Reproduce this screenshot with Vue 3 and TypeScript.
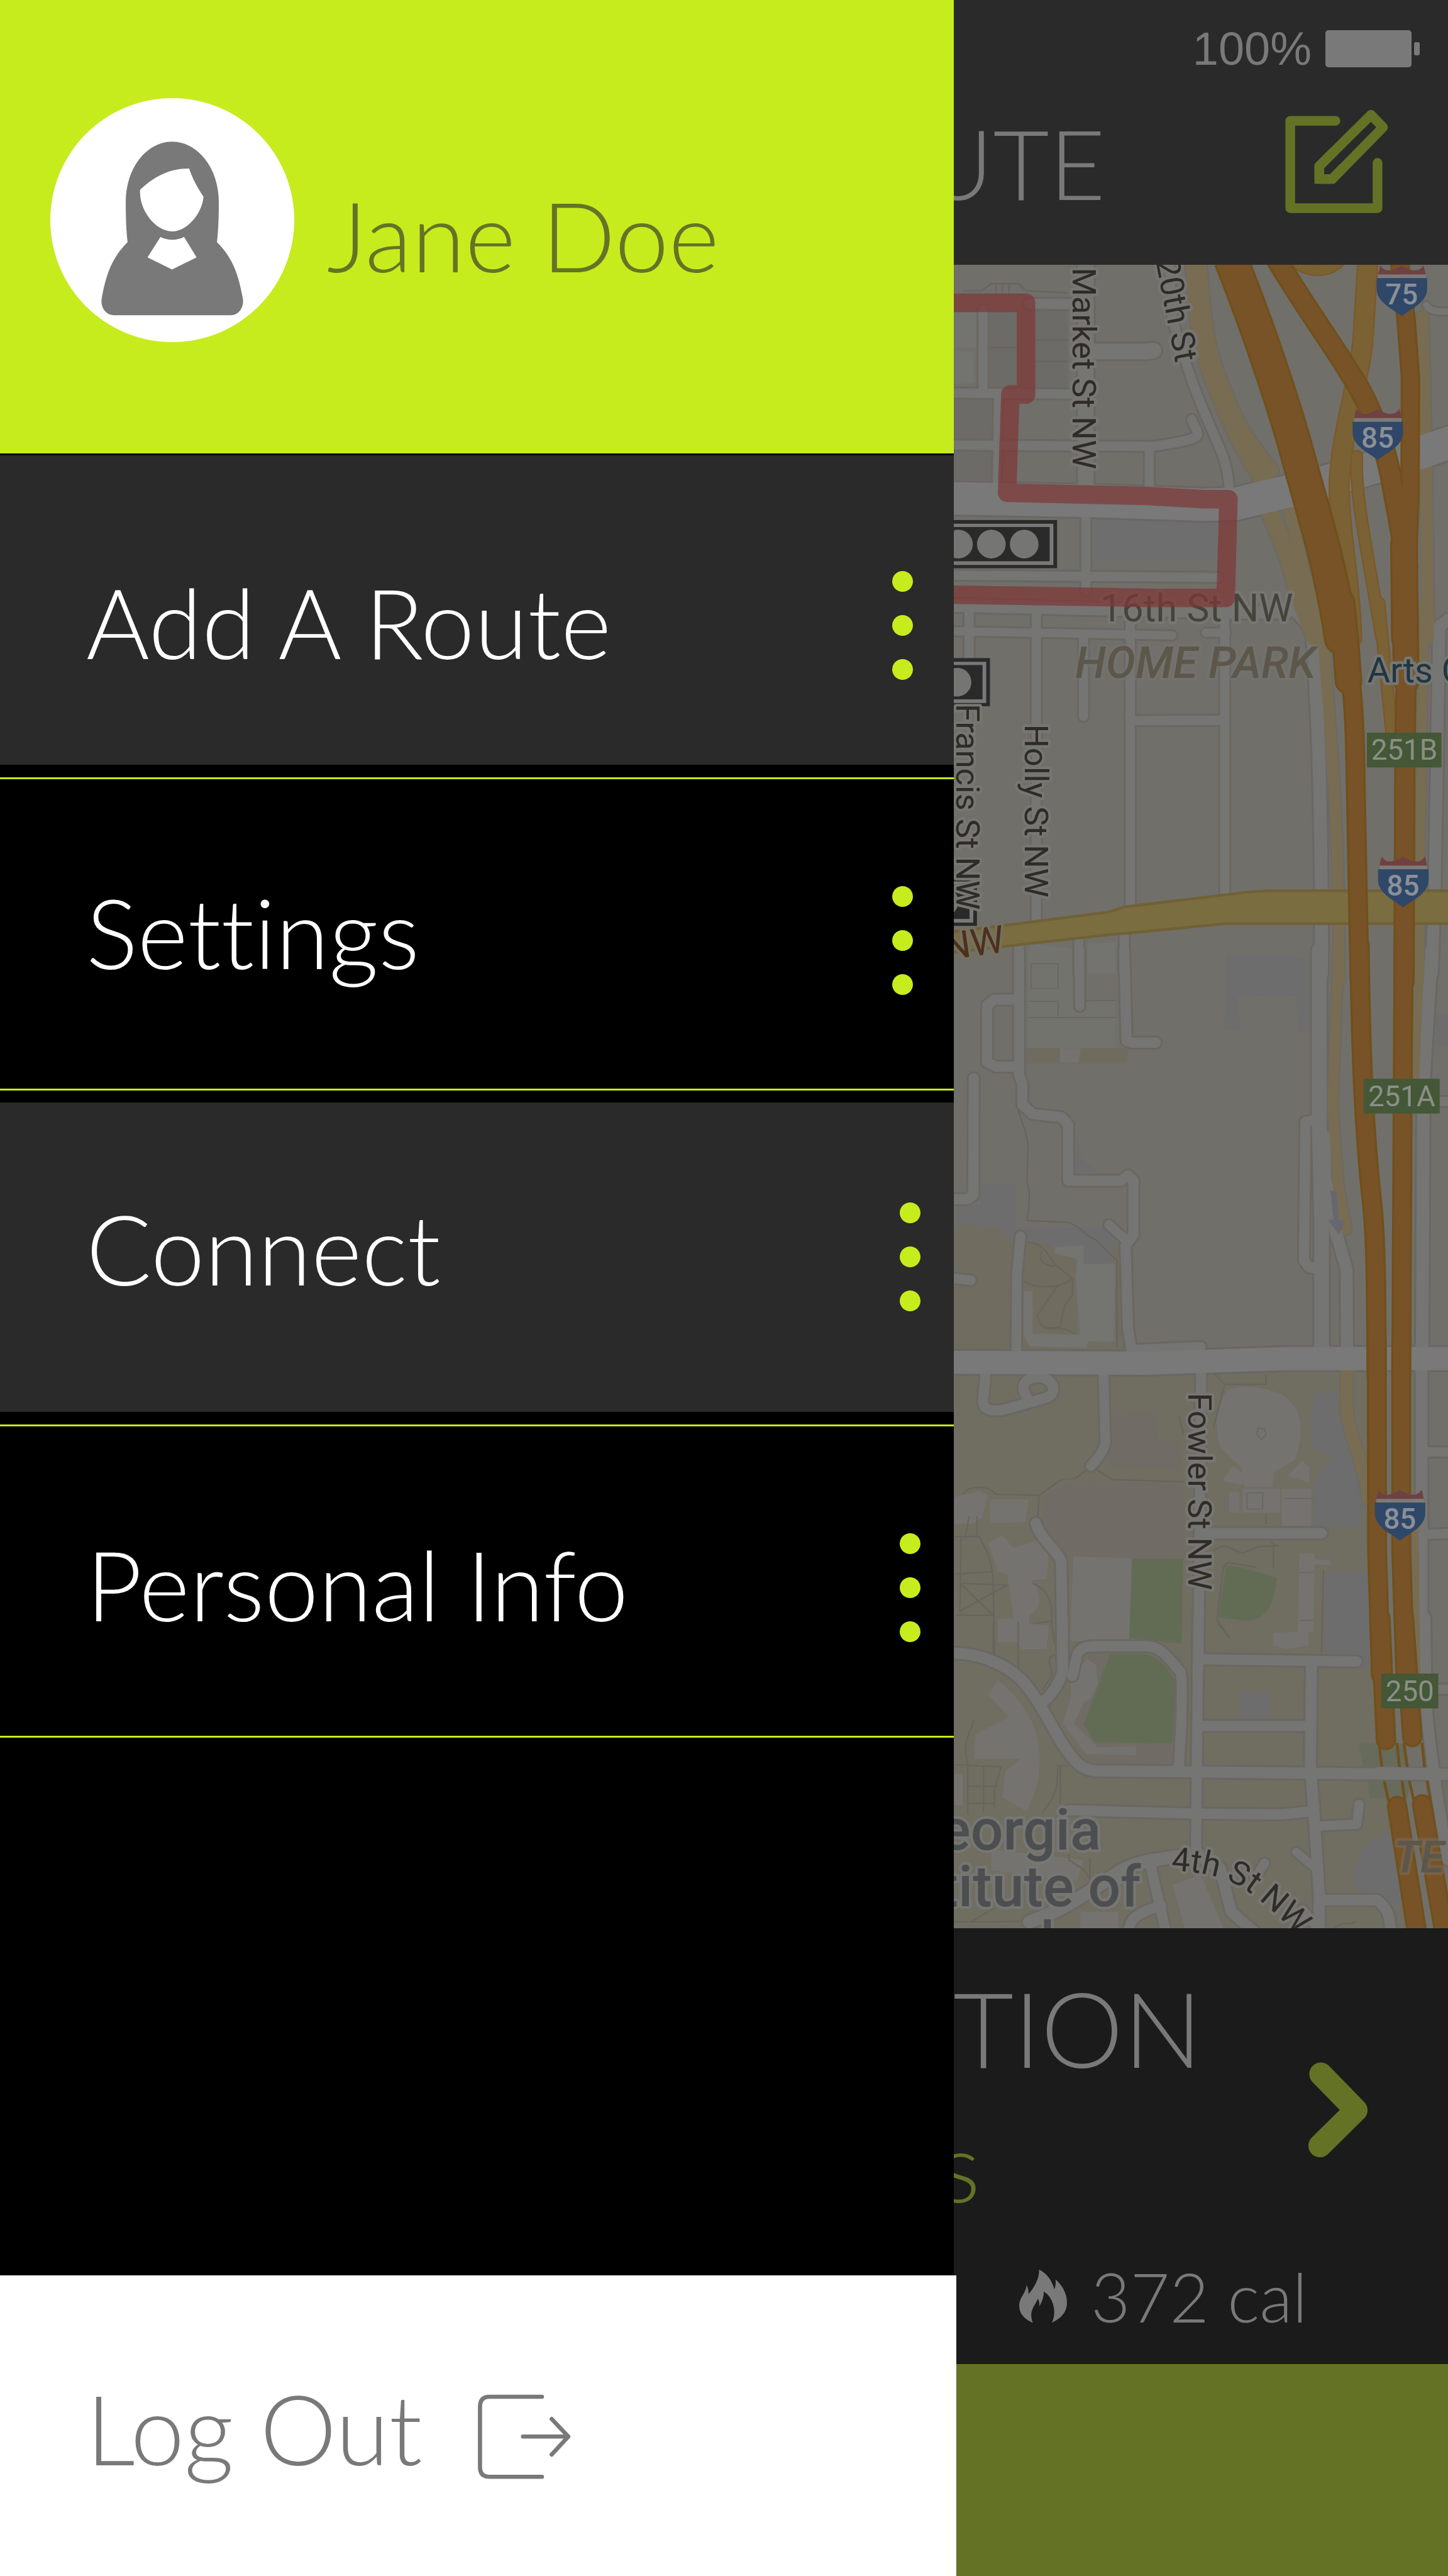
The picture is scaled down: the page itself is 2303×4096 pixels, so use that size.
<script setup lang="ts">
interface MenuItem {
  label: string
  tone: string
  place: string
}

const menu: MenuItem[] = [
  { label: 'Add A Route', tone: 'shaded', place: 'low inner loose' },
  { label: 'Settings', tone: 'plain', place: 'middle inner tight' },
  { label: 'Connect', tone: 'shaded', place: 'high outer tight' },
  { label: 'Personal Info', tone: 'plain', place: 'middle outer loose' },
]

// The map is surveyed in five stacked sheets; each has its own origin and vertical step.
type Sheet = 'A' | 'B' | 'C' | 'D' | 'E'
const sheets: Record<Sheet, [number, number]> = {
  A: [560, 0.5102],
  B: [1300, 0.5102],
  C: [2050, 0.574],
  D: [2900, 0.4464],
  E: [3500, 0.4464],
}

// Projects an absolute path (M, L, C, Z with x y pairs) from sheet units to map units.
function project(sheet: Sheet, d: string): string {
  const [top, step] = sheets[sheet]
  let n = 0
  return d.replace(/-?\d+/g, (v) =>
    n++ % 2 === 0 ? String(Math.round(2050 + Number(v) * 0.6856)) : String(Math.round(top + Number(v) * step)),
  )
}

type Shape = [Sheet, string, string]
type Line = [Sheet, number, string]

const areas = (
  [
    ['A', '#6c6b67', 'M125 208L370 208L370 540L125 540Z'],
    ['A', '#6c6b67', 'M13 590L138 590L138 930L13 930Z'],
    ['A', '#6e6e6e', 'M445 1095L845 1108L840 1270L445 1270Z'],
    ['A', '#737370', 'M13 220L85 220L85 370L13 370ZM13 380L75 390L75 520L13 525Z'],
    ['B', '#737370', 'M250 1440L380 1460L380 1568L245 1568ZM432 1440L520 1435L520 1568L432 1568Z'],
    ['C', '#73736e', 'M245 0L385 0L385 190L520 188L520 365L248 365Z'],
    ['C', '#706b5f', 'M240 368L558 368L558 425L240 425Z'],
    ['C', '#747370', 'M345 368L412 368L405 422L345 422Z'],
    ['C', '#6d6d6d', 'M870 20L1080 20L1130 35L1130 305L1097 305L1090 170L905 172L915 300L865 300Z'],
    ['C', '#6d6d6d', 'M400 710L412 780L470 835L400 835Z'],
    ['C', '#6d6d6d', 'M95 878L205 878L205 1040L520 1045L525 1165L420 1190L300 1110L180 1085L165 1040L20 1030L20 960L95 955Z'],
    ['C', '#706c60', 'M13 1030L160 1040L175 1075L215 1095L300 1100L400 1160L400 1440L540 1500L13 1505Z'],
    ['C', '#706c60', 'M510 1100L550 1110L565 1500L400 1500L520 1470Z'],
    ['C', '#747470', 'M330 1115L420 1110L420 1180L520 1180L515 1470L435 1470L430 1495L250 1490L230 1440L230 1280L260 1280L260 1440L410 1445L395 1230L400 1160L330 1140Z'],
    ['C', '#6d6d6d', 'M1530 240L1568 240L1568 360L1528 360Z'],
    ['D', '#706d61', 'M0 120L1315 120L1315 1568L0 1568Z'],
    ['E', '#706d61', 'M0 0L1330 0L1500 1500L0 1500Z'],
    ['E', '#706d61', 'M1540 700L1568 700L1568 1000L1545 1000Z'],
    ['D', '#706b65', 'M512 318L655 325L650 458L510 460ZM498 462L730 470L725 604L498 590Z'],
    ['D', '#706b65', 'M290 800C290 700 360 665 420 665L735 668L735 1038L400 1025C320 950 290 900 290 800Z'],
    ['D', '#747370', 'M870 230C900 190 980 200 1040 240C1100 290 1125 400 1085 560L1020 620L1015 690L925 690L920 600L850 500C830 400 840 290 870 230Z'],
    ['D', '#747370', 'M890 585L925 630L920 680L858 660ZM1108 562L1132 600L1130 668L1062 640Z'],
    ['D', '#6d6d6d', 'M1155 230L1215 230L1225 370L1310 700L1290 880L1140 880L1150 640L1205 550L1140 500L1135 340Z'],
    ['D', '#747370', 'M920 700L1040 700L1040 815L920 815ZM1045 700L1138 700L1138 880L1045 880ZM878 715L912 715L912 815L878 815Z'],
    ['D', '#747370', 'M388 1025L572 1035L565 1440L378 1435Z'],
    ['D', '#626c55', 'M573 1038L733 1038L730 1448L565 1420Z'],
    ['D', '#626c55', 'M870 1075C900 1065 960 1100 1030 1130C1020 1260 1000 1330 930 1338L845 1320Z'],
    ['D', '#6d6d6d', 'M1182 1100L1315 1100L1320 1568L1182 1568Z'],
    ['E', '#6d6d6d', 'M1182 0L1318 0L1320 195L1182 195Z'],
    ['D', '#747370', 'M1100 1010L1148 1010L1148 1040L1200 1045L1198 1070L1148 1065L1145 1392L1128 1395L1130 1455L1060 1475L1018 1455L1018 1395L1095 1390Z'],
    ['D', '#747370', 'M125 750L248 750L238 860L125 865ZM13 740L90 710L120 730L100 840L70 870L13 870Z'],
    ['D', '#747370', 'M120 960L165 925L200 985L270 950L310 1020L305 1135L255 1140C290 1200 290 1280 250 1310L250 1350L310 1360L305 1475L225 1475L215 1440L150 1440L150 1330L200 1325L180 1110L150 1100Z'],
    ['E', '#706b65', 'M440 150L505 150L422 495L455 580L700 590L700 680L460 680L355 490Z'],
    ['E', '#626c55', 'M503 155L620 155C680 190 690 240 710 290L700 588L455 580L422 495Z'],
    ['E', '#747370', 'M430 180L460 205L465 300L440 375L425 380L390 490L465 605L585 600L585 642L430 638L355 490L380 360L380 280Z'],
    ['E', '#6d6d6d', 'M913 340L1010 340L1010 462L913 462Z'],
    ['E', '#6d6d6d', 'M1385 1020C1300 1060 1285 1130 1283 1180L1265 1200L1280 1300L1345 1310L1400 1370L1440 1370Z'],
    ['E', '#666b5b', 'M1288 587L1425 587L1440 695L1300 695ZM1315 770L1450 770L1440 848L1322 848Z'],
    ['E', '#747370', 'M150 280C250 400 290 550 282 700C280 800 250 880 240 915L165 850L175 720L225 660L75 660L80 540L185 460L120 350Z'],
    ['E', '#747370', 'M700 1270L790 1220L860 1480L740 1480ZM410 1400L530 1400L530 1480L410 1480ZM130 1100L420 1150L400 1250L130 1200Z'],
    ['E', '#747370', 'M13 735L40 735L40 885L13 885Z'],
  ] as Shape[]
).map(([s, fill, d]) => ({ fill, d: project(s, d) }))

const footways = (
  [
    ['A', 3, 'M40 130L100 130L130 100L215 100L240 130L370 140M145 105L145 150M165 105L165 150M185 105L185 150M125 370L210 370M268 337L372 337M268 430L372 430'],
    ['C', 3, 'M215 600C225 650 248 700 245 740L242 870C255 920 248 970 242 1015L370 1022C410 1035 430 1080 455 1085L525 1165L525 1495'],
    ['C', 3, 'M245 1098C290 1100 300 1130 330 1180L385 1235C340 1275 270 1270 232 1245M340 1260L275 1370C280 1430 320 1430 345 1415C360 1360 350 1340 385 1300L385 1235M290 1130C275 1150 285 1185 330 1188M300 1418C340 1418 370 1420 395 1445'],
    ['C', 2, 'M248 252L520 252M255 50L340 50L340 142L255 142ZM248 192L340 192L340 252M420 190L520 188'],
    ['D', 3, 'M280 730L350 655L395 650L430 605M460 605L510 655L735 665M40 725C60 680 120 680 145 725L280 730L275 850'],
    ['D', 3, 'M13 930L90 930C120 1000 135 1080 135 1160L140 1500M35 930L30 1300M60 830L50 920M85 830L85 925M30 1155L135 1310M30 1290L180 1165L30 1155M13 1110L135 1100M20 1310L135 1310'],
    ['D', 3, 'M260 1155C330 1200 320 1300 320 1350L330 1450M260 1350L315 1340'],
    ['D', 3, 'M835 145L865 195L995 195L995 145M865 195L830 400M720 350L735 430M830 1000C870 950 890 1000 920 1010L970 980L1030 975L1010 955M1018 980L1018 1080M995 820L995 870'],
    ['D', 3, 'M965 1080L875 1055L860 1080L840 1330L880 1420M1175 1090L1170 1490'],
    ['D', 2, 'M935 720L985 720L985 798L935 798ZM1050 745L1138 745M1100 1105L1145 1105M1100 1335L1145 1335M970 405L990 410L995 440L980 462L965 435Z'],
    ['E', 3, 'M215 0L215 220M135 0L135 150M330 160C290 180 330 220 320 260L290 330M75 470C65 530 45 560 50 640L55 690L55 930M13 690L160 700L140 810L140 900M55 793L150 793M55 875L140 875M105 700L105 920M340 700L335 800C320 870 310 880 290 920M370 695L335 695M347 695L347 880'],
    ['E', 3, 'M13 1450L230 1448M65 1450L140 1380M440 1140L440 1250M375 1120L375 1150C400 1180 430 1190 440 1250M1210 1478C1240 1440 1270 1470 1275 1445M840 0L880 75'],
  ] as Line[]
).map(([s, w, d]) => ({ w, d: project(s, d) }))

const streets = (
  [
    ['A', 20, 'M103 210L103 550'],
    ['A', 22, 'M250 185L385 187'],
    ['A', 20, 'M0 563L400 567'],
    ['A', 18, 'M152 567L148 960'],
    ['A', 20, 'M0 782L370 785L640 787C700 775 760 765 777 745C785 720 765 700 762 675'],
    ['A', 34, 'M428 0L428 960'],
    ['A', 34, 'M430 387L620 387L640 382'],
    ['A', 20, 'M690 0L700 250L740 420C770 560 820 700 850 800C870 860 875 900 880 975'],
    ['A', 20, 'M627 790L627 980'],
    ['A', 20, 'M428 1060L428 1400'],
    ['A', 20, 'M0 1333L845 1342'],
    ['A', 28, 'M0 1460L900 1490L1060 1490'],
    ['A', 14, 'M1500 190C1510 220 1540 218 1580 218'],
    ['B', 20, 'M60 30L60 300'],
    ['B', 20, 'M272 30L272 1400'],
    ['B', 18, 'M0 120L700 137'],
    ['B', 18, 'M805 125L870 125'],
    ['B', 20, 'M568 30L568 1320'],
    ['B', 20, 'M865 60L865 1290'],
    ['B', 20, 'M568 497L865 495'],
    ['B', 20, 'M420 155L420 480'],
    ['B', 28, 'M1075 10L1140 110C1150 300 1170 600 1170 1568'],
    ['B', 26, 'M1568 70L1540 100L1525 1230L1517 1568'],
    ['B', 20, 'M217 1410L217 1568M405 1370L405 1568M548 1360L548 1568'],
    ['C', 22, 'M217 0L217 470L228 500L228 580L260 615L350 628L372 655L372 865L540 865L560 845L578 865L578 1070L553 1110L560 1420L575 1530'],
    ['C', 22, 'M210 185L140 185L117 205L117 420L145 437L215 437'],
    ['C', 20, 'M408 0L408 210'],
    ['C', 22, 'M548 0L555 340L570 347L648 347'],
    ['C', 22, 'M75 480L73 920L55 935L0 935'],
    ['C', 21, 'M222 1075L210 1220L208 1530'],
    ['C', 21, 'M0 1232L65 1240'],
    ['C', 20, 'M500 1032L550 1085'],
    ['C', 32, 'M1163 0L1163 650L1170 1000L1170 1530'],
    ['C', 22, 'M1150 640L1118 645L1115 1165L1130 1192L1160 1195'],
    ['C', 26, 'M1180 700L1180 850L1215 1060L1248 1200L1250 1530'],
    ['C', 27, 'M1517 0L1490 500L1487 1568'],
    ['C', 20, 'M1500 568L1580 568'],
    ['C', 20, 'M590 1500L790 1490'],
    ['D', 22, 'M113 130L105 250C95 330 140 325 170 315L300 260C340 240 330 170 285 160C230 160 220 210 240 250'],
    ['D', 21, 'M483 130L488 480C480 530 460 560 443 590'],
    ['D', 22, 'M790 130L782 1568'],
    ['D', 23, 'M270 865C285 950 350 1010 350 1060L355 1568'],
    ['D', 23, 'M790 915L1170 915'],
    ['D', 26, 'M1485 0L1485 1568'],
    ['D', 20, 'M1490 520L1580 522M1490 920L1580 915'],
    ['E', 24, 'M0 150C80 145 160 190 220 270C270 350 300 450 350 580C390 670 410 715 460 718L1568 738'],
    ['E', 23, 'M355 -20L355 240C340 310 320 350 290 390'],
    ['E', 22, 'M385 260L400 160C410 120 430 117 460 117L620 117C670 120 690 180 725 240C735 300 728 500 720 700'],
    ['E', 22, 'M782 -20L774 1110'],
    ['E', 22, 'M790 180L1280 190'],
    ['E', 24, 'M1137 200L1135 700L1145 900L1162 1320L1162 1500'],
    ['E', 22, 'M785 502L1130 502'],
    ['E', 22, 'M375 910L760 925L1040 930L1140 915'],
    ['E', 20, 'M1160 985L1280 977L1288 880'],
    ['E', 18, 'M1090 1110L1160 1200'],
    ['E', 23, 'M1165 1345L1345 1345C1380 1390 1385 1420 1387 1500'],
    ['E', 28, 'M250 1450C350 1400 450 1290 540 1200C600 1150 660 1150 780 1120'],
    ['E', 22, 'M630 1170L680 1500'],
    ['E', 22, 'M565 1500C560 1430 600 1400 665 1370'],
    ['E', 24, 'M780 1130L850 1190L885 1400L960 1500'],
    ['E', 20, 'M990 1165L960 1240M1110 1390L1170 1500'],
    ['E', 24, 'M1495 -20L1500 400C1510 600 1530 800 1550 1000L1568 1150'],
    ['E', 20, 'M1500 325L1580 325'],
  ] as Line[]
).map(([s, w, d]) => ({ w, d: project(s, d) }))

const avenues = (
  [
    ['A', 70, 'M0 1008L450 1020L800 1035L900 1030L1150 950L1400 850L1600 760'],
    ['D', 50, 'M0 88L620 92L1060 70L1580 70'],
  ] as Line[]
).map(([s, w, d]) => ({ w, d: project(s, d) }))

const ramps = (
  [
    ['A', 46, 'M775 0C785 250 800 400 850 550C890 690 930 800 985 910'],
    ['A', 34, 'M830 500C880 650 930 760 1010 890'],
    ['A', 36, 'M1000 1050C1050 1200 1090 1350 1090 1400L1150 1600'],
    ['A', 24, 'M1060 1020L1120 1350L1180 1600'],
    ['A', 26, 'M1488 240L1500 900L1505 1600'],
    ['B', 24, 'M1170 60C1200 600 1225 900 1225 1600'],
    ['B', 20, 'M1494 0L1482 900L1478 1600'],
    ['C', 22, 'M1222 0L1205 580L1222 880L1248 1050'],
    ['C', 18, 'M1480 0L1465 480'],
    ['D', 26, 'M1250 125L1250 330C1255 430 1310 600 1315 750'],
    ['D', 14, 'M1465 800L1470 1600'],
  ] as Line[]
).map(([s, w, d]) => ({ w, d: project(s, d) }))

const connectors = (
  [
    ['A', 46, 'M1315 0L1300 350C1280 550 1230 750 1225 950C1225 1150 1260 1350 1265 1600'],
    ['A', 28, 'M1280 830C1275 1000 1310 1200 1360 1600'],
    ['A', 26, 'M1080 0C1120 50 1190 60 1230 0'],
    ['B', 28, 'M1350 0L1390 540'],
  ] as Line[]
).map(([s, w, d]) => ({ w, d: project(s, d) }))

const freeways = (
  [
    ['A', 76, 'M885 0C960 250 1050 600 1100 850C1140 1050 1200 1300 1232 1600'],
    ['A', 48, 'M1030 0C1110 180 1190 330 1260 480C1330 620 1370 800 1385 900C1400 1000 1420 1150 1440 1300'],
    ['A', 42, 'M1415 0L1435 240L1450 500L1448 1000L1433 1600'],
    ['A', 60, 'M1430 1200L1433 1600'],
    ['B', 60, 'M1232 0C1245 150 1250 250 1255 330'],
    ['B', 43, 'M1255 250C1270 400 1275 500 1278 800L1290 1600'],
    ['B', 58, 'M1433 0L1437 330'],
    ['B', 46, 'M1437 300L1432 600L1429 1600'],
    ['C', 44, 'M1290 -20C1292 300 1300 600 1325 900C1340 1050 1342 1200 1344 1600'],
    ['C', 43, 'M1428 -20L1421 1600'],
    ['D', 43, 'M1344 -20L1345 1000L1356 1600'],
    ['D', 43, 'M1421 -20L1420 1000L1434 1600'],
    ['E', 44, 'M1355 -20L1372 570'],
    ['E', 44, 'M1430 -20L1455 555'],
    ['E', 44, 'M1407 890L1480 1600'],
    ['E', 44, 'M1487 880L1568 1600'],
  ] as Line[]
).map(([s, w, d]) => ({ w, d: project(s, d) }))

const parkway = project(
  'B',
  'M-10 1393L170 1365L500 1308L550 1285L880 1232C960 1215 1020 1217 1100 1217L1600 1217L1600 1356L870 1356L570 1396L500 1403L170 1453L-10 1482Z',
)
const tunnels = project('E', 'M1352 600L1360 697M1408 590L1415 697M1430 590L1440 697M1487 590L1494 697M1368 772L1380 860M1424 772L1432 860M1447 772L1460 860M1503 772L1512 860')
const overpass = project('E', 'M1350 725L1580 735')
const loop = project('A', 'M-20 180L239 180L239 568L190 568L179 984L620 998L800 1012L877 1012L868 1428L640 1428L-20 1415')
const oneWay = project('C', 'M1197 905L1215 905L1225 1012L1243 1015L1225 1070L1192 1015L1207 1010Z')

const shields = [
  { x: 2971, y: 571, n: '75' },
  { x: 2919, y: 881, n: '85' },
  { x: 2974, y: 1847, n: '85' },
  { x: 2967, y: 3214, n: '85' },
]
const exits = [
  { x: 2950, y: 1580, w: 161, n: '251B' },
  { x: 2943, y: 2327, w: 164, n: '251A' },
  { x: 2981, y: 3611, w: 123, n: '250' },
]
const signals = [
  { x: 2281, y: 1121 },
  { x: 2136, y: 1419 },
  { x: 2108, y: 1893 },
]
const streetNames = [
  { x: 2314, y: 576, r: 90, n: 'Market St NW' },
  { x: 2494, y: 562, r: 79, n: '20th St' },
  { x: 2064, y: 1518, r: 90, n: 'Francis St NW' },
  { x: 2211, y: 1562, r: 90, n: 'Holly St NW' },
  { x: 2565, y: 3005, r: 90, n: 'Fowler St NW' },
]
</script>

<template>
  <div class="app">
    <aside class="drawer">
      <header class="profile">
        <svg class="avatar" viewBox="109 212 527 527" aria-hidden="true">
          <circle cx="372.500" cy="475.500" r="263.500" fill="#fff" />
          <path
            fill="#797979"
            fill-rule="evenodd"
            d="M372 306C428 306 473 364 473 436C473 470 472 498 469 523C502 556 515 590 525 645C528 664 516 681 499 681H247C229 681 217 664 220 645C230 590 243 556 276 523C273 498 272 470 272 436C272 364 316 306 372 306ZM303 410C329 385 364 363 409 364C416 386 427 405 440 425C437 462 404 500 372 500C338 500 300 455 303 410ZM347 512L319 556L372 582L425 556L398 512C383 520 362 520 347 512Z"
          />
        </svg>
        <h1 class="name">Jane Doe</h1>
      </header>

      <nav class="menu">
        <button v-for="item in menu" :key="item.label" type="button" class="item" :class="[item.tone, item.place]">
          <span class="label">{{ item.label }}</span>
          <span class="dots" aria-hidden="true"><i></i><i></i><i></i></span>
        </button>
      </nav>

      <button type="button" class="logout">
        <span>Log Out</span>
        <svg class="exit" viewBox="1030 5166 204 184" aria-hidden="true">
          <path d="M1170 5171H1056Q1036 5171 1036 5193V5323Q1036 5344 1056 5344H1170M1129 5257H1227M1191 5219L1227 5257L1191 5296" />
        </svg>
      </button>
    </aside>

    <main class="screen">
      <header class="bar">
        <div class="status">
          <span>100%</span>
          <svg class="battery" viewBox="0 0 150 60" aria-hidden="true">
            <rect width="137" height="59" rx="5" />
            <rect x="141" y="19" width="9" height="21" rx="3" />
          </svg>
        </div>
        <div class="heading">
          <h2 class="title">UTE</h2>
          <button type="button" class="edit" aria-label="Edit route">
            <svg viewBox="2774 234 226 226" aria-hidden="true">
              <path stroke-linejoin="round" d="M2883 260H2785V449H2974V351" />
              <path stroke-linejoin="round" d="M2848 386V358L2960 247L2986 274L2876 386Z" />
              <path d="M2880 326L2848 358V386H2876L2900 361" stroke-linecap="butt" />
            </svg>
          </button>
        </div>
      </header>

      <svg class="map" viewBox="2058 570 1067 3591" role="img" aria-label="Route map">
        <rect x="2058" y="570" width="1067" height="3591" fill="#706f6a" />
        <path v-for="(a, i) in areas" :key="'a' + i" :d="a.d" :fill="a.fill" />
        <g class="footways">
          <path v-for="(l, i) in footways" :key="'w' + i" :d="l.d" :stroke-width="l.w" />
        </g>
        <g class="lines">
          <path v-for="(l, i) in streets" :key="'sc' + i" :d="l.d" :stroke-width="l.w + 8" stroke="#6a6763" />
          <path v-for="(l, i) in avenues" :key="'ac' + i" :d="l.d" :stroke-width="l.w + 8" stroke="#6a6763" />
          <path v-for="(l, i) in ramps" :key="'rc' + i" :d="l.d" :stroke-width="l.w + 6" stroke="#6b6a66" />
          <path v-for="(l, i) in streets" :key="'sf' + i" :d="l.d" :stroke-width="l.w" stroke="#757573" />
          <path v-for="(l, i) in ramps" :key="'rf' + i" :d="l.d" :stroke-width="l.w" stroke="#786d52" />
          <path v-for="(l, i) in avenues" :key="'af' + i" :d="l.d" :stroke-width="l.w" stroke="#797979" />
          <path :d="parkway" fill="#7a6d40" stroke="#706137" stroke-width="6" />
          <path v-for="(l, i) in connectors" :key="'cc' + i" :d="l.d" :stroke-width="l.w" stroke="#7c5829" />
          <path v-for="(l, i) in connectors" :key="'cf' + i" :d="l.d" :stroke-width="l.w - 6" stroke="#7a6234" />
          <path v-for="(l, i) in freeways" :key="'fc' + i" :d="l.d" :stroke-width="l.w" stroke="#70501c" />
          <path v-for="(l, i) in freeways" :key="'ff' + i" :d="l.d" :stroke-width="l.w - 9" stroke="#785327" />
          <path :d="tunnels" stroke="#70501c" stroke-width="6" />
          <path :d="overpass" stroke="#757573" stroke-width="24" />
        </g>
        <path :d="oneWay" fill="#67676f" />

        <g v-for="e in exits" :key="e.n">
          <rect :x="e.x" :y="e.y" :width="e.w" height="75" fill="#445736" />
          <text class="exit-no" :x="e.x + e.w / 2" :y="e.y + 59">{{ e.n }}</text>
        </g>
        <g v-for="(s, i) in shields" :key="'sh' + i" :transform="`translate(${s.x} ${s.y})`">
          <path fill="#704142" d="M8 0Q14 12 28 11Q38 10 43 6Q50 5 54 0Q58 5 65 6Q70 10 80 11Q94 12 101 0L106 20H3Z" />
          <rect x="3" y="20" width="103" height="8" fill="#7b7b7b" />
          <path fill="#2f4768" d="M0 28H109V50C109 80 78 92 54 110C31 92 0 80 0 50Z" />
          <text class="shield-no" x="54" y="84">{{ s.n }}</text>
        </g>
        <g v-for="(s, i) in signals" :key="'si' + i" :transform="`translate(${s.x} ${s.y})`">
          <rect x="-260" width="260" height="104" fill="#2a2a2a" />
          <rect x="-256" y="8" width="248" height="89" fill="#797979" />
          <rect x="-248" y="15" width="232" height="74" fill="#2a2a2a" />
          <circle v-for="k in 3" :key="k" :cx="-71 * k" cy="52" r="31" fill="#757573" />
        </g>

        <text
          v-for="s in streetNames"
          :key="s.n"
          class="street"
          :transform="`translate(${s.x} ${s.y}) rotate(${s.r})`"
        >{{ s.n }}</text>
        <path id="fourth" d="M2527 4036Q2636 4040 2694 4082T2794 4172" fill="none" />
        <text class="street"><textPath href="#fourth">4th St NW</textPath></text>
        <text class="avenue" x="2374" y="1340">16th St NW</text>
        <text class="parkway" transform="translate(2040 2071) rotate(-8)">NW</text>
        <text class="district" x="2320" y="1462">HOME PARK</text>
        <text class="district" x="3008" y="4040">TE</text>
        <text class="place-name" x="2951" y="1471">Arts C</text>
        <g class="campus">
          <text x="2376" y="3991">eorgia</text>
          <text x="2462" y="4113">titute of</text>
          <text x="2276" y="4234">l</text>
        </g>
        <path :d="loop" class="loop" />
      </svg>

      <section class="stats">
        <div class="route-name">
          <div>
            <h3 class="kind">TION</h3>
            <p class="unit">s</p>
          </div>
          <button type="button" class="next" aria-label="Next route">
            <svg viewBox="2821 4446 130 208" aria-hidden="true">
              <path d="M2849 4473L2925 4551L2847 4628" />
            </svg>
          </button>
        </div>
        <p class="calories">
          <svg viewBox="219 1137 150 167" aria-hidden="true">
            <path
              d="M281 1137C310 1150 325 1180 329 1199C334 1190 334 1178 333 1168C352 1184 369 1210 369 1240C369 1275 345 1292 321 1304C332 1285 330 1262 325 1245C318 1222 306 1212 296 1206C297 1222 290 1240 282 1252C283 1243 281 1234 278 1228C270 1250 247 1266 262 1304C240 1295 219 1278 219 1250C219 1225 240 1212 242 1186C247 1195 249 1204 248 1214C262 1200 284 1165 281 1137Z"
            />
          </svg>
          <span>372 cal</span>
        </p>
      </section>

      <footer class="foot"></footer>
    </main>
  </div>
</template>

<style>
body {
  margin: 0;
  background: #000;
}
</style>

<style scoped>
.app {
  display: grid;
  grid-template-columns: minmax(0, 1517fr) minmax(0, 786fr);
  min-height: 100vh;
  font-family: Lato, 'Open Sans', sans-serif;
  font-weight: 300;
  font-size: 154px;
  line-height: 156px;
  font-variant-ligatures: no-common-ligatures;
}
h1,
h2,
h3,
p {
  margin: 0;
  font: inherit;
}
button {
  margin: 0;
  padding: 0;
  border: 0;
  background: none;
  font: inherit;
  color: inherit;
  text-align: left;
  cursor: pointer;
}
svg {
  display: block;
}

.drawer {
  position: relative;
  z-index: 1;
  display: flex;
  flex-direction: column;
  background: #000;
}
.profile {
  display: flex;
  align-items: flex-start;
  gap: 52px;
  box-sizing: border-box;
  height: 721px;
  padding: 156px 80px 0;
  background: #c6ec1e;
}
.avatar {
  flex: none;
  width: 388px;
  height: 388px;
}
.name {
  padding-top: 140px;
  color: #657326;
}
.menu {
  display: flex;
  flex-direction: column;
  flex: 1;
  padding-top: 3px;
}
.item {
  display: flex;
  justify-content: space-between;
  align-items: flex-start;
  box-sizing: border-box;
  padding-left: 137px;
  color: #fff;
}
.shaded {
  height: 492px;
  margin-bottom: 20px;
  background: #2a2a2a;
}
.plain {
  height: 498px;
  border-top: 3px solid #c6ec1e;
  border-bottom: 3px solid #c6ec1e;
}
.plain:not(:last-child) {
  margin-bottom: 19px;
}
.low {
  padding-top: 179px;
}
.middle {
  padding-top: 165px;
}
.high {
  padding-top: 154px;
}
.inner {
  padding-right: 65px;
}
.outer {
  padding-right: 53px;
}
.loose .label {
  padding-top: 8px;
}
.dots {
  display: flex;
  flex-direction: column;
  gap: 37px;
  padding-top: 5px;
}
.dots i {
  width: 33px;
  height: 33px;
  border-radius: 50%;
  background: #c6ec1e;
}
.logout {
  display: flex;
  align-items: flex-start;
  gap: 88px;
  box-sizing: border-box;
  height: 478px;
  margin-right: -4px;
  padding: 165px 137px 0;
  background: #fff;
  color: #797979;
}
.exit {
  width: 150px;
  height: 136px;
  margin-top: 24px;
  fill: none;
  stroke: #797979;
  stroke-width: 9;
  stroke-linecap: round;
  stroke-linejoin: round;
}

.screen {
  display: flex;
  flex-direction: column;
  overflow: hidden;
  color: #797979;
}
.bar {
  box-sizing: border-box;
  height: 421px;
  padding-top: 42px;
  background: #2a2a2a;
}
.status {
  display: flex;
  justify-content: flex-end;
  align-items: center;
  gap: 22px;
  padding-right: 45px;
  font: 400 74px/72px 'Liberation Sans', Arial, sans-serif;
}
.battery {
  width: 150px;
  height: 60px;
  fill: #797979;
}
.heading {
  display: flex;
  justify-content: flex-end;
  gap: 286px;
  padding: 59px 93px 0 0;
}
.title {
  padding-top: 8px;
}
.edit svg {
  width: 166px;
  height: 166px;
  fill: none;
  stroke: #647226;
  stroke-width: 21;
  stroke-linecap: round;
}
.map {
  width: 100%;
  height: auto;
}
.footways path {
  fill: none;
  stroke: #67645e;
}
.lines path:not([fill]) {
  fill: none;
  stroke-linecap: round;
  stroke-linejoin: round;
}
.map text {
  font-family: Roboto, 'Noto Sans', sans-serif;
  font-weight: 400;
  paint-order: stroke;
  stroke: #767673;
  stroke-width: 12px;
  stroke-linejoin: round;
}
.map .street {
  font-size: 71px;
  fill: #2f2b27;
}
.map .avenue {
  font-size: 83px;
  fill: #45443b;
}
.map .parkway {
  font-size: 82px;
  fill: #4c301d;
  stroke: #75705f;
}
.map .district {
  font-size: 96px;
  font-style: italic;
  font-weight: 500;
  fill: #5c574a;
  stroke-opacity: 0.4;
}
.map .place-name {
  font-size: 76px;
  fill: #203642;
}
.map .exit-no {
  font-size: 62px;
  fill: #8a8f86;
  stroke: none;
  text-anchor: middle;
}
.map .shield-no {
  font-size: 62px;
  font-weight: 500;
  fill: #8b9097;
  stroke: none;
  text-anchor: middle;
}
.map .campus text {
  font-size: 124px;
  font-weight: 500;
  fill: #4c4e50;
  text-anchor: end;
}
.loop {
  fill: none;
  stroke: #7e3838;
  stroke-opacity: 0.72;
  stroke-width: 40;
  stroke-linejoin: round;
}

.stats {
  box-sizing: border-box;
  height: 693px;
  padding-top: 75px;
  background: #1b1b1b;
}
.route-name {
  display: flex;
  justify-content: space-between;
}
.kind {
  display: flex;
  justify-content: flex-end;
  width: 395px;
  font-size: 166px;
  line-height: 166px;
}
.unit {
  display: flex;
  justify-content: flex-end;
  width: 42px;
  padding-top: 58px;
  color: #647226;
}
.next {
  align-self: flex-start;
  padding: 137px 127px 0 0;
}
.next svg {
  width: 96px;
  height: 153px;
  fill: none;
  stroke: #647226;
  stroke-width: 50;
  stroke-linecap: round;
  stroke-linejoin: round;
}
.calories {
  display: flex;
  align-items: center;
  gap: 38px;
  padding: 76px 0 0 104px;
  font-size: 108px;
  line-height: 108px;
}
.calories svg {
  width: 76px;
  height: 86px;
  fill: #797979;
}
.foot {
  flex: 1;
  min-height: 337px;
  background: #647226;
}
</style>
